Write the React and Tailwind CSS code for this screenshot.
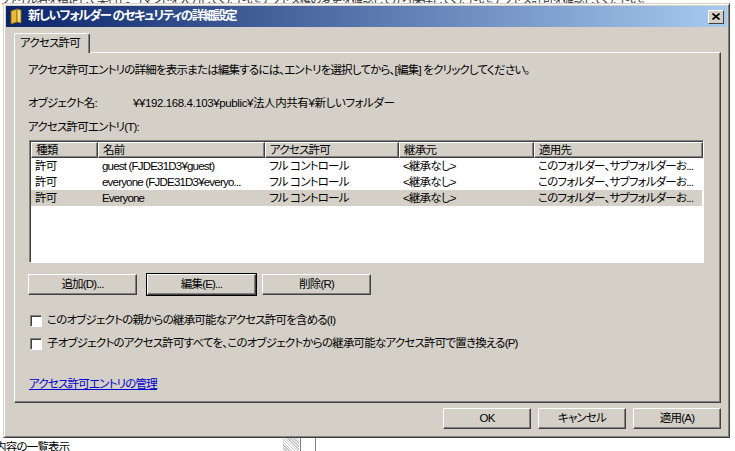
import React from "react";

const font = { fontFamily: '"Liberation Sans", "Noto Sans CJK JP", sans-serif' };

const cols = [
  { label: "種類", w: "w-[67px]" },
  { label: "名前", w: "w-[167px]" },
  { label: "アクセス許可", w: "w-[134px]" },
  { label: "継承元", w: "w-[135px]" },
  { label: "適用先", w: "w-[169px]" },
];

const rows = [
  ["許可", "guest (FJDE31D3¥guest)", "フル コントロール", "<継承なし>", "このフォルダー、サブフォルダーお..."],
  ["許可", "everyone (FJDE31D3¥everyo...", "フル コントロール", "<継承なし>", "このフォルダー、サブフォルダーお..."],
  ["許可", "Everyone", "フル コントロール", "<継承なし>", "このフォルダー、サブフォルダーお..."],
];

function Btn({ children, w = "w-[109px]", focus }) {
  return (
    <button
      className={`${w} h-[21px] bg-[#d4d0c8] text-black flex items-center justify-center border border-t-white border-l-white border-r-[#404040] border-b-[#404040] shadow-[inset_-1px_-1px_0_#808080] ${focus ? "outline outline-1 outline-black" : ""}`}
    >
      {children}
    </button>
  );
}

function Check({ label }) {
  return (
    <div className="flex items-center gap-[5px] h-[13px]">
      <span className="w-[12px] h-[12px] shrink-0 bg-white border border-t-[#808080] border-l-[#808080] border-r-white border-b-white shadow-[inset_1px_1px_0_#404040]" />
      <span className="whitespace-nowrap">{label}</span>
    </div>
  );
}

export default function App() {
  return (
    <div
      className="w-[735px] h-[451px] bg-white relative overflow-hidden text-[11.5px] tracking-[-0.8px] [font-feature-settings:'palt']"
      style={font}
    >
      {/* background behind the dialog */}
      <div className="absolute left-0 top-[-8px] text-[#333] whitespace-nowrap">
        ファイル名を指定して実行し、コマンドを入力してください。アクセス権の変更を確認してから保存してください。アクセス許可を確認してください。
      </div>
      <div className="absolute left-[-5px] top-[439px] text-black whitespace-nowrap">内容の一覧表示</div>
      <div className="absolute left-[283px] top-[438px] w-[16px] h-[13px] bg-[repeating-linear-gradient(45deg,#c8c8c8_0_1px,#ffffff_1px_2px)]" />
      <div className="absolute left-[300px] top-[438px] w-[1px] h-[13px] bg-[#808080]" />
      <div className="absolute left-[315px] top-[438px] w-[1px] h-[13px] bg-[#808080]" />

      {/* dialog */}
      <div className="absolute left-[3px] top-[3px] w-[727px] h-[435px] bg-[#d4d0c8] border border-t-[#d4d0c8] border-l-[#d4d0c8] border-r-[#404040] border-b-[#404040] shadow-[inset_1px_1px_0_#ffffff,inset_-1px_-1px_0_#808080] p-[2px] flex flex-col">
        {/* title bar */}
        <div className="h-[21px] flex items-center bg-[linear-gradient(90deg,#0a246a,#a6caf0)] pl-[4px] pr-[3px]">
          <svg width="12" height="17" viewBox="0 0 12 17" className="mr-[6px]">
            <path d="M1 3 L7 1 L7 14 L1 16 Z" fill="#e8b93a" stroke="#8a6a10" strokeWidth="0.8" />
            <path d="M7 1 L11 2 L11 15 L7 14 Z" fill="#f6d66a" stroke="#8a6a10" strokeWidth="0.8" />
          </svg>
          <span className="text-white font-bold text-[12.5px] tracking-[-1.4px] whitespace-nowrap">新しいフォルダー のセキュリティの詳細設定</span>
          <div className="ml-auto w-[16px] h-[14px] bg-[#d4d0c8] border border-t-white border-l-white border-r-[#404040] border-b-[#404040] flex items-center justify-center">
            <svg width="8" height="7" viewBox="0 0 8 7">
              <path d="M0.5 0.5 L7.5 6.5 M7.5 0.5 L0.5 6.5" stroke="black" strokeWidth="1.6" />
            </svg>
          </div>
        </div>

        {/* tabs */}
        <div className="pl-[8px] pr-[6px] pt-[6px] flex flex-col">
          <div className="flex">
            <div className="h-[20px] w-[76px] px-[5px] whitespace-nowrap flex items-center border border-b-0 border-t-white border-l-white border-r-[#404040] shadow-[inset_-1px_0_0_#808080] rounded-t-[2px] relative -mb-[1px] bg-[#d4d0c8] z-10">
              アクセス許可
            </div>
          </div>
          <div className="h-[351px] border border-t-white border-l-white border-r-[#404040] border-b-[#404040] shadow-[inset_-1px_-1px_0_#808080] pl-[13px] pr-[16px] flex flex-col text-black">
            <div className="mt-[10px] h-[14px] leading-[14px] whitespace-nowrap">
              アクセス許可エントリの詳細を表示または編集するには、エントリを選択してから、[編集] をクリックしてください。
            </div>
            <div className="mt-[19px] h-[14px] leading-[14px] flex whitespace-nowrap">
              <span className="w-[105px]">オブジェクト名:</span>
              <span className="tracking-[-0.4px]">¥¥192.168.4.103¥public¥法人内共有¥新しいフォルダー</span>
            </div>
            <div className="mt-[10px] h-[14px] leading-[14px]">アクセス許可エントリ(T):</div>

            {/* list view */}
            <div className="mt-[6px] ml-[1px] h-[123px] bg-white border border-t-[#808080] border-l-[#808080] border-r-white border-b-white shadow-[inset_1px_1px_0_#404040] p-[1px] flex flex-col overflow-hidden">
              <div className="flex h-[16px]">
                {cols.map((c) => (
                  <div
                    key={c.label}
                    className={`${c.w} h-[16px] shrink-0 bg-[#d4d0c8] border border-t-white border-l-white border-r-[#404040] border-b-[#404040] shadow-[inset_-1px_-1px_0_#808080] pl-[4px] leading-[14px]`}
                  >
                    {c.label}
                  </div>
                ))}
              </div>
              {rows.map((r, i) => (
                <div key={i} className={`flex h-[16px] leading-[16px] ${i === 2 ? "bg-[#d4d0c8]" : ""}`}>
                  {r.map((cell, j) => (
                    <div key={j} className={`${cols[j].w} shrink-0 pl-[4px] whitespace-nowrap overflow-hidden`}>
                      {cell}
                    </div>
                  ))}
                </div>
              ))}
            </div>

            <div className="mt-[11px] flex gap-[6px]">
              <Btn>追加(D)...</Btn>
              <div className="ml-[4px]">
                <Btn focus>編集(E)...</Btn>
              </div>
              <Btn>削除(R)</Btn>
            </div>

            <div className="mt-[19px] flex flex-col gap-[10px] ml-[2px]">
              <Check label="このオブジェクトの親からの継承可能なアクセス許可を含める(I)" />
              <Check label="子オブジェクトのアクセス許可すべてを、このオブジェクトからの継承可能なアクセス許可で置き換える(P)" />
            </div>

            <div className="mt-[27px] ml-[1px] text-[#0000cc] underline leading-[14px]">アクセス許可エントリの管理</div>
          </div>
        </div>

        {/* bottom buttons */}
        <div className="mt-[5px] pr-[6px] flex justify-end gap-[7px]">
          <Btn w="w-[88px]">OK</Btn>
          <Btn w="w-[88px]">キャンセル</Btn>
          <Btn w="w-[88px]">適用(A)</Btn>
        </div>
      </div>
    </div>
  );
}
